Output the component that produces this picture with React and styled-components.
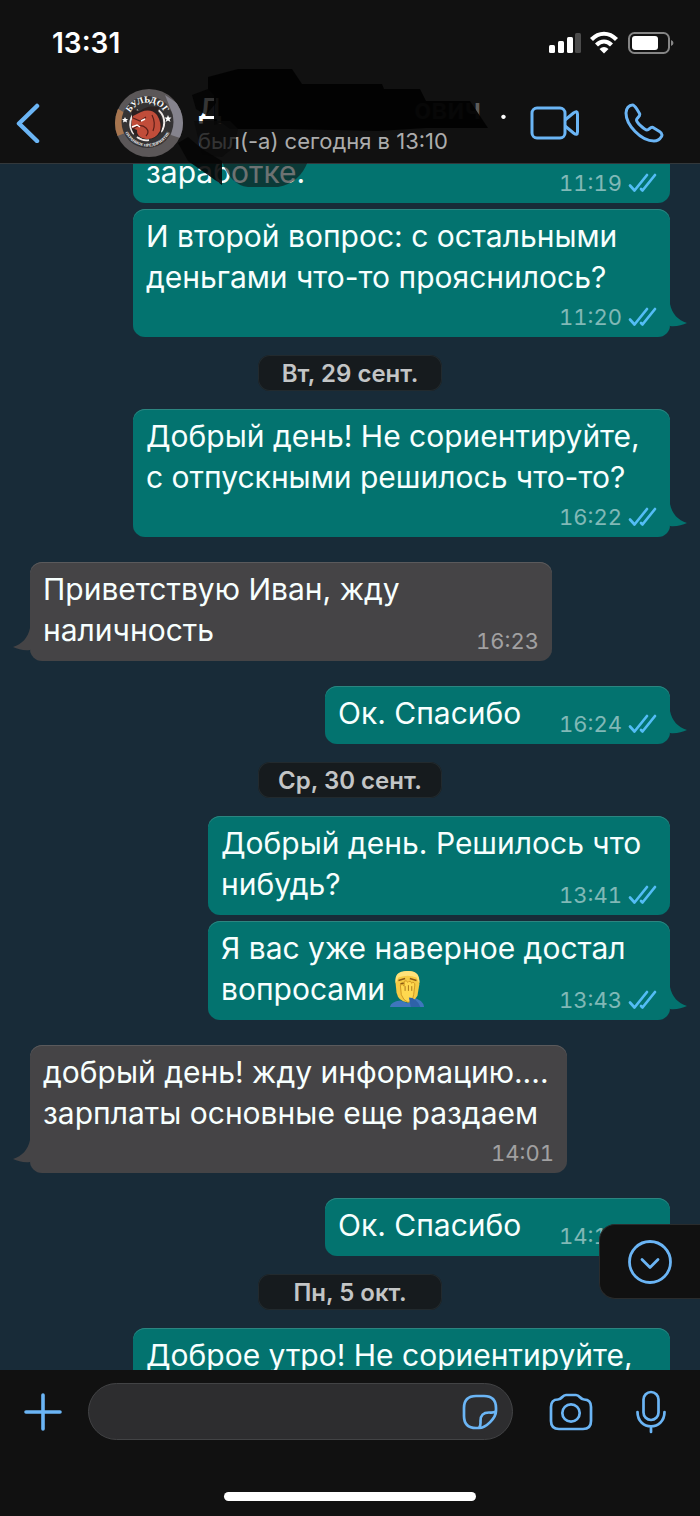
import React, { useLayoutEffect, useRef } from 'react'
import styled, { createGlobalStyle } from 'styled-components'

const blue = '#6bb5f5'

const messages = [
  { id: 1, type: 'out', lines: ['заработке.'], time: '11:19', width: 537 },
  { id: 2, type: 'out', lines: ['И второй вопрос: с остальными', 'деньгами что-то прояснилось?'], time: '11:20', width: 537, stacked: true, tail: true, gap: 6 },
  { id: 3, type: 'date', label: 'Вт, 29 сент.' },
  { id: 4, type: 'out', lines: ['Добрый день! Не сориентируйте,', 'с отпускными решилось что-то?'], time: '16:22', width: 537, stacked: true, tail: true },
  { id: 5, type: 'in', lines: ['Приветствую Иван, жду', 'наличность'], time: '16:23', width: 522, tail: true, gap: 25 },
  { id: 6, type: 'out', lines: ['Ок. Спасибо'], time: '16:24', width: 345, tail: true, gap: 25 },
  { id: 7, type: 'date', label: 'Ср, 30 сент.' },
  { id: 8, type: 'out', lines: ['Добрый день. Решилось что', 'нибудь?'], time: '13:41', width: 462 },
  { id: 9, type: 'out', lines: ['Я вас уже наверное достал', 'вопросами'], emoji: true, time: '13:43', width: 462, tail: true, gap: 6 },
  { id: 10, type: 'in', lines: ['добрый день! жду информацию....', 'зарплаты основные еще раздаем'], time: '14:01', width: 537, stacked: true, tail: true, gap: 25 },
  { id: 11, type: 'out', lines: ['Ок. Спасибо'], time: '14:11', width: 345, gap: 25 },
  { id: 12, type: 'date', label: 'Пн, 5 окт.' },
  { id: 13, type: 'out', lines: ['Доброе утро! Не сориентируйте,'], width: 537 }
]

const App = () => {
  const feed = useRef(null)
  useLayoutEffect(() => {
    feed.current.scrollTop = 19
  }, [])
  return (
    <>
      <GlobalStyle />
      <Screen>
        <Header>
          <StatusBar>
            <Clock>13:31</Clock>
            <StatusIcons />
          </StatusBar>
          <NavBar>
            <IconButton aria-label="Назад">
              <svg width="24" height="40" viewBox="0 0 24 40" fill="none" stroke={blue} strokeWidth="4.5" strokeLinecap="round" strokeLinejoin="round">
                <path d="M21 3 3 20.500 21 38" />
              </svg>
            </IconButton>
            <Avatar />
            <Contact>
              <Name><span>Д</span><Faded>ович</Faded><span>.</span></Name>
              <LastSeen>был(-а) сегодня в 13:10</LastSeen>
              <Marker />
            </Contact>
            <IconButton aria-label="Видеозвонок">
              <svg width="50" height="36" viewBox="0 0 50 36" fill="none" stroke={blue} strokeWidth="3" strokeLinejoin="round">
                <rect x="2" y="3" width="33" height="30" rx="5" />
                <path d="M35 15 43.500 8Q47.500 5 47.500 9V27Q47.500 31 43.500 28L35 21" />
              </svg>
            </IconButton>
            <IconButton aria-label="Позвонить">
              <svg width="40" height="40" viewBox="0 0 40 40" fill="none" stroke={blue} strokeWidth="3" strokeLinejoin="round">
                <path d="M2 10C2 5.500 5 2 8.500 2C10.500 2 11.500 4 14 8L15.500 10.500C17 13.500 12.500 14.500 12.500 17C12.500 19.500 20.500 27 23 27C25.500 27 26 23.500 29 24.500L35.500 28.500C38 30 38.500 31.500 37.500 33.500C36 36 33 38 30 38C17 38 2 22 2 10Z" />
              </svg>
            </IconButton>
          </NavBar>
        </Header>
        <Feed ref={feed}>
          {messages.map(item => (
            item.type === 'date'
              ? <DateLabel key={item.id}>{item.label}</DateLabel>
              : <Message key={item.id} data={item} />
          ))}
        </Feed>
        <Footer>
          <ScrollDown aria-label="Вниз">
            <svg width="46" height="46" viewBox="0 0 46 46" fill="none" stroke={blue} strokeWidth="2.800" strokeLinecap="round" strokeLinejoin="round">
              <circle cx="23" cy="23" r="20.500" />
              <path d="M15 20.500 23 28.500 31 20.500" />
            </svg>
          </ScrollDown>
          <Composer>
            <IconButton aria-label="Прикрепить">
              <svg width="38" height="38" viewBox="0 0 38 38" stroke={blue} strokeWidth="3.600" strokeLinecap="round">
                <path d="M19 2V36M2 19H36" />
              </svg>
            </IconButton>
            <Field>
              <input type="text" aria-label="Сообщение" />
              <IconButton aria-label="Стикеры">
                <svg width="36" height="36" viewBox="0 0 36 36" fill="none" stroke={blue} strokeWidth="2.700" strokeLinejoin="round">
                  <path d="M17 34H14Q2 34 2 22V14Q2 2 14 2H22Q34 2 34 14V17C34 24 24 34 17 34C19 32 18.500 30 18.500 27C18.500 21 21 18.500 27 18.500C30 18.500 32.500 19 34 17" />
                </svg>
              </IconButton>
            </Field>
            <IconButton aria-label="Камера">
              <svg width="44" height="38" viewBox="0 0 44 38" fill="none" stroke={blue} strokeWidth="2.700" strokeLinejoin="round">
                <path d="M9 6.500C13 6.500 13 2 17 2H27C31 2 31 6.500 35 6.500Q42 6.500 42 14V28Q42 36 34 36H10Q2 36 2 28V14Q2 6.500 9 6.500Z" />
                <circle cx="22" cy="20" r="8.700" />
              </svg>
            </IconButton>
            <IconButton aria-label="Голосовое сообщение">
              <svg width="32" height="44" viewBox="0 0 32 44" fill="none" stroke={blue} strokeWidth="2.700" strokeLinecap="round">
                <rect x="8.500" y="2" width="15" height="28" rx="7.500" />
                <path d="M2.500 22C2.500 41 29.500 41 29.500 22M16 36.500V42" />
              </svg>
            </IconButton>
          </Composer>
          <HomeBar />
        </Footer>
      </Screen>
    </>
  )
}

const Message = ({ data }) => {
  const isOut = data.type === 'out'
  return (
    <Row $out={isOut} $gap={data.gap}>
      <Bubble $out={isOut} $width={data.width}>
        <Text>
          {data.lines.map(line => <span key={line}>{line}</span>)}
          {data.emoji && <Facepalm />}
        </Text>
        {data.time && (
          <Meta $stacked={data.stacked}>
            <time>{data.time}</time>
            {isOut && <Ticks />}
          </Meta>
        )}
        {data.tail && (
          <Tail $out={isOut} width="18" height="24" viewBox="0 0 18 24">
            <path d="M0 0C2 10 8 16 17 19C12 21 6 23 0 22Z" />
          </Tail>
        )}
      </Bubble>
    </Row>
  )
}

const Ticks = () => (
  <svg width="29" height="20" viewBox="0 0 29 20" fill="none" stroke="#53bdf5" strokeWidth="2.700" strokeLinecap="round" strokeLinejoin="round">
    <path d="M2 12.500 6.500 17.500 19 2M13 16 14.500 17.500 27 2" />
  </svg>
)

const Facepalm = () => (
  <Emoji width="38" height="38" viewBox="0 0 38 40" role="img" aria-label="facepalm">
    <path d="M1 39Q2 33 12 32L20 35 24 29Q36 31 37 39Z" fill="#3f76bd" />
    <path d="M7 14Q6 2 19 1Q33 1 32 15L30 27Q26 34 19 34Q10 33 8 24Z" fill="#f6cb45" />
    <path d="M7 14Q5 1 19 1Q33 0 32 14L29 8Q20 4 10 8Z" fill="#ffe27a" />
    <path d="M10 11 17 9M22 9 29 11M12 15Q15 13 17 15" stroke="#8a5a14" strokeWidth="1.500" fill="none" />
    <path d="M13 26 12 16Q14 14 16 17L16 12Q18 10 20 13L21 12Q23 11 24 14L25 13Q28 13 27 18L26 26Q25 33 20 34Q15 32 13 26Z" fill="#ffd84f" stroke="#cf9622" strokeWidth="1" />
    <path d="M17 17V22M20.500 16V22M24 17V22" stroke="#a8741b" strokeWidth="1" />
    <path d="M21 29Q29 29 33 39H23Z" fill="#2f62a8" />
  </Emoji>
)

const StatusIcons = () => (
  <svg width="126" height="24" viewBox="0 0 126 24" fill="#fff" role="img" aria-label="Сеть, Wi-Fi, батарея">
    <rect x="1" y="14" width="6" height="8" rx="1.500" />
    <rect x="10" y="10" width="6" height="12" rx="1.500" />
    <rect x="19" y="6" width="6" height="16" rx="1.500" />
    <rect x="27" y="2" width="6" height="20" rx="1.500" fill="#4b4b4b" />
    <g fill="none" stroke="#fff" strokeWidth="4.200">
      <path d="M43.500 8.500C51 .8 61 .8 68.500 8.500" />
      <path d="M48.500 14C53 9.500 59 9.500 63.500 14" />
    </g>
    <path d="M51.500 18Q56 14 60.500 18L56 22.500Z" />
    <rect x="81" y="2" width="40" height="20" rx="5.500" fill="none" stroke="#858585" strokeWidth="2" />
    <rect x="84" y="5" width="26" height="14" rx="3" />
    <path d="M123 9Q125.500 10 125.500 12T123 15Z" fill="#858585" />
  </svg>
)

const Avatar = () => (
  <svg width="68" height="68" viewBox="0 0 68 68" role="img" aria-label="Бульдог">
    <defs>
      <clipPath id="round"><circle cx="34" cy="34" r="34" /></clipPath>
      <path id="arcTop" d="M13 33A19.500 19.500 0 0 1 52 33" />
      <path id="arcBottom" d="M8 33A24.500 24.500 0 0 0 57 33" />
    </defs>
    <g clipPath="url(#round)">
      <rect width="68" height="68" fill="#5b5758" />
      <path d="M0 18 10 24V44L0 48Z" fill="#a7754f" />
      <path d="M50 6 68 18V50L56 46 58 26Z" fill="#85838d" />
      <circle cx="32.500" cy="33" r="26" fill="#353334" />
      <path d="M23 21A16 16 0 0 0 19 45M42 20A16 16 0 0 1 46 43M22 48A16 16 0 0 0 34 51" fill="none" stroke="#efe9e6" strokeWidth="2" />
      <path d="M17 27 17 20 25 22Q33 16 40 18L45 17 43 23Q50 33 46 43Q40 52 29 50L20 46Q15 40 17 34Z" fill="#2b2020" />
      <path d="M18 27 26 23Q36 19 42 26Q47 34 45 42Q40 51 31 50Q21 48 22 41L17 39Q16 32 18 27Z" fill="#c14d3a" />
      <path d="M18 29 25 32 31 28M18 40Q25 34 31 39Q35 43 31 47M37 26Q41 34 38 42" fill="none" stroke="#5b1f19" strokeWidth="1.200" />
      <path d="M17 38 22 36 25 38M26 32 30 30" stroke="#fff" strokeWidth="1.400" fill="none" />
      <path d="M10 28 11 30H13L11.500 31.500 12 33.500 10 32.500 8 33.500 8.500 31.500 7 30H9ZM53 26 54 28.500H56.500L54.500 30.500 55.500 33 53 31.500 50.500 33 51.500 30.500 49.500 28.500H52Z" fill="#fff" />
      <AvatarText $size={9}><textPath href="#arcTop" startOffset="50%" textAnchor="middle">БУЛЬДОГ</textPath></AvatarText>
      <AvatarText $size={4}><textPath href="#arcBottom" startOffset="50%" textAnchor="middle">ОХРАННОЕ ПРЕДПРИЯТИЕ</textPath></AvatarText>
    </g>
  </svg>
)

// black marker strokes over the contact name
const Marker = () => (
  <Scribble width="350" height="130" viewBox="0 0 350 130">
    <path d="M30 14 60 6H114L124 21H204L206 26H242L248 38H292L310 65H248L200 68 110 66 52 66 44 60 36 62V32L30 26Z" fill="#020202" fillOpacity=".95" />
    <path d="M14 32 30 26H38V40L28 52 18 46Z" fill="#020202" fillOpacity=".8" />
    <path d="M16 58H52L60 66 56 84 44 94 24 92Z" fill="#0b0b0b" fillOpacity=".75" />
    <path d="M0 80 10 74 24 86 44 98V122L30 112 10 98Z" fill="#050505" fillOpacity=".9" />
    <path d="M44 98H130Q122 120 100 124H70Q52 122 44 98Z" fill="#101414" fillOpacity=".6" />
  </Scribble>
)

const GlobalStyle = createGlobalStyle`
  * {
    box-sizing: border-box;
  }
  body {
    margin: 0;
    background: #111111;
    color: #ffffff;
    font-family: Inter, "Noto Sans", "Liberation Sans", sans-serif;
  }
  svg {
    display: block;
    flex-shrink: 0;
  }
`

const Screen = styled.div`
  display: flex;
  flex-direction: column;
  height: 100vh;
`

const Header = styled.header`
  position: relative;
  z-index: 1;
  background: #111111;
  border-bottom: 1px solid #33383b;
`

const StatusBar = styled.div`
  display: flex;
  align-items: center;
  justify-content: space-between;
  height: 86px;
  padding: 0 26px 0 52px;
`

const Clock = styled.time`
  font-size: 28px;
  font-weight: 600;
`

const NavBar = styled.div`
  display: flex;
  align-items: center;
  height: 77px;
  padding: 0 36px 4px 16px;
  > svg {
    margin-left: 75px;
  }
  > button + button {
    margin-left: 44px;
  }
`

const IconButton = styled.button`
  display: flex;
  flex-shrink: 0;
  padding: 0;
  border: 0;
  background: none;
  cursor: pointer;
`

const Contact = styled.div`
  position: relative;
  flex: 1;
  margin-left: 15px;
`

const Name = styled.h1`
  display: flex;
  align-items: baseline;
  margin: 0;
  padding-right: 22px;
  font-size: 28px;
  line-height: 36px;
  font-weight: 600;
  span:last-child {
    z-index: 1;
    margin-left: 18px;
  }
`

const Faded = styled.span`
  margin-left: auto;
  color: #5c5c5c;
`

const LastSeen = styled.p`
  margin: 0;
  font-size: 22px;
  line-height: 28px;
  color: #acacac;
  white-space: nowrap;
`

const Scribble = styled.svg`
  position: absolute;
  top: -28px;
  left: -20px;
  pointer-events: none;
`

const AvatarText = styled.text`
  font-family: "Liberation Serif", serif;
  font-size: ${props => props.$size}px;
  font-weight: 700;
  fill: #ffffff;
`

const Feed = styled.main`
  flex: 1;
  min-height: 0;
  overflow-y: auto;
  scrollbar-width: none;
  padding-bottom: 24px;
  background: #182b38;
`

const Row = styled.div`
  display: flex;
  justify-content: ${props => props.$out ? 'flex-end' : 'flex-start'};
  margin-top: ${props => props.$gap || 0}px;
  padding: 0 30px;
`

const Bubble = styled.div`
  position: relative;
  display: grid;
  width: ${props => props.$width}px;
  max-width: 100%;
  padding: 7px 13px 10px;
  border-radius: 12px;
  background: ${props => props.$out ? '#03736f' : '#454446'};
  box-shadow: inset 0 1px 0 ${props => props.$out ? '#2c8580' : '#5a5a5c'};
`

const Text = styled.p`
  grid-area: 1 / 1;
  margin: 0;
  font-size: 30px;
  line-height: 41px;
  color: #f7fffe;
  white-space: nowrap;
  span + span::before {
    content: '';
    display: block;
  }
`

const Meta = styled.div`
  grid-area: ${props => props.$stacked ? '2 / 1' : '1 / 1'};
  display: flex;
  align-items: center;
  align-self: end;
  justify-self: end;
  gap: 6px;
  margin-top: 9px;
  font-size: 22px;
  line-height: 20px;
  font-variant-numeric: tabular-nums;
  color: rgba(255, 255, 255, 0.5);
`

const Tail = styled.svg`
  position: absolute;
  bottom: 9px;
  ${props => props.$out ? 'left: 100%;' : 'right: 100%; transform: scaleX(-1);'}
  fill: ${props => props.$out ? '#03736f' : '#454446'};
`

const Emoji = styled.svg`
  display: inline-block;
  margin-left: 3px;
  vertical-align: -8px;
`

const DateLabel = styled.div`
  display: flex;
  align-items: center;
  justify-content: center;
  width: 184px;
  height: 36px;
  margin: 18px auto;
  border-radius: 12px;
  background: #161b1e;
  box-shadow: inset 0 0 0 1px #222a2e;
  color: #c3c5c6;
  font-size: 24px;
  font-weight: 600;
`

const Footer = styled.footer`
  position: relative;
  display: flex;
  flex-direction: column;
  align-items: center;
  padding-bottom: 15px;
  background: #111111;
`

const ScrollDown = styled.button`
  position: absolute;
  right: 0;
  bottom: 100%;
  display: flex;
  align-items: center;
  justify-content: flex-end;
  width: 101px;
  height: 75px;
  margin-bottom: 71px;
  padding: 0 27px;
  border: 1px solid #2a2c2d;
  border-right: 0;
  border-radius: 16px 0 0 16px;
  background: #111111;
  cursor: pointer;
`

const Composer = styled.div`
  display: flex;
  align-items: center;
  width: 100%;
  padding: 13px 33px 0 24px;
  > button:last-child {
    margin-left: 42px;
  }
`

const Field = styled.div`
  display: flex;
  flex: 1;
  align-items: center;
  min-width: 0;
  height: 57px;
  margin: 0 36px 0 26px;
  padding: 0 14px 0 24px;
  border: 1px solid #424345;
  border-radius: 29px;
  background: #2d2d2f;
  input {
    flex: 1;
    min-width: 0;
    border: 0;
    outline: 0;
    background: none;
    color: #ffffff;
    font: inherit;
    font-size: 30px;
  }
`

const HomeBar = styled.div`
  width: 36%;
  height: 9px;
  margin-top: 52px;
  border-radius: 5px;
  background: #ffffff;
`

export default App
